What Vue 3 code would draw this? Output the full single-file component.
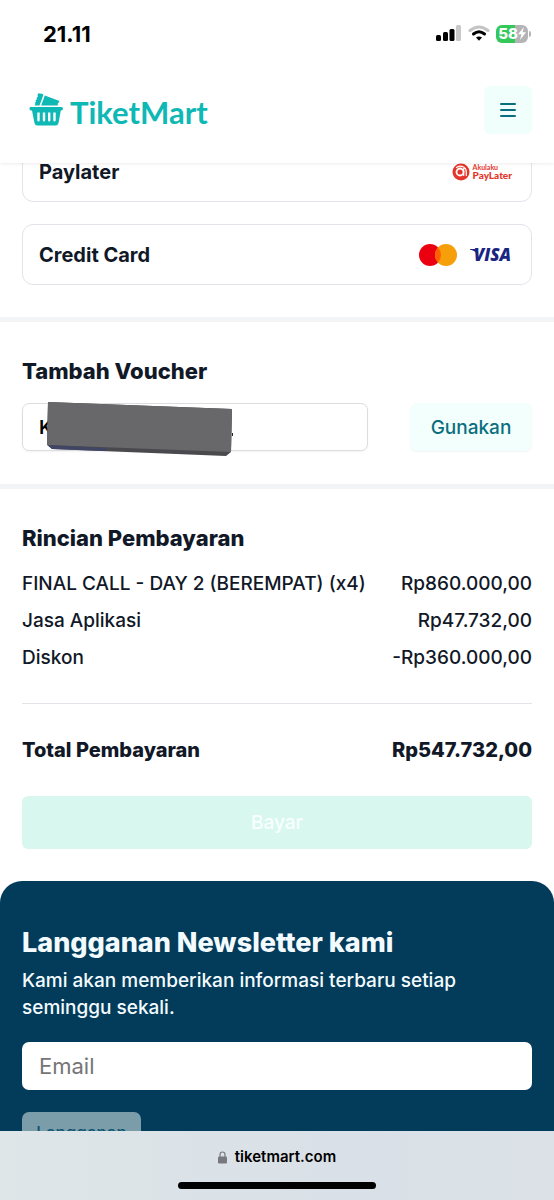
<script setup>
import { ref } from 'vue'

const voucher = ref('K')
const email = ref('')
const rows = [
  { label: 'FINAL CALL - DAY 2 (BEREMPAT) (x4)', value: 'Rp860.000,00' },
  { label: 'Jasa Aplikasi', value: 'Rp47.732,00' },
  { label: 'Diskon', value: '-Rp360.000,00' },
]
</script>

<template>
  <div class="screen">
    <header class="top">
      <div class="status">
        <span class="clock">21.11</span>
        <div class="indicators">
          <svg width="26" height="17" viewBox="0 0 26 17" aria-hidden="true">
            <rect x="0" y="10" width="5" height="6" rx="1.5" />
            <rect x="7" y="7" width="5" height="9" rx="1.5" />
            <rect x="13.500" y="4" width="5" height="12" rx="1.500" />
            <rect x="20" y="0" width="5" height="16" rx="1.500" fill="#c8c8c8" />
          </svg>
          <svg width="22" height="17" viewBox="0 0 22 17" fill="none" aria-hidden="true">
            <path d="M2 5.500Q11-1.500 20 5.500" stroke="#c4c4c4" stroke-width="3" stroke-linecap="round" />
            <path d="M5.500 9Q11 4.500 16.500 9" stroke="#000" stroke-width="3" stroke-linecap="round" />
            <path d="M8 12.500Q11 10.300 14 12.500L11 15.800Z" fill="#000" />
          </svg>
          <div class="battery">
            <span class="cell">58<svg width="8" height="13" viewBox="0 0 8 13" aria-hidden="true"><path d="M6 0L0 7.300H3.500L2 13L8 5.300H4.500Z" fill="#fff" /></svg></span>
            <span class="tip"></span>
          </div>
        </div>
      </div>
      <nav class="nav">
        <a class="brand" href="#">
          <svg width="35" height="34" viewBox="0 0 35 34" fill="#0db8b5" aria-hidden="true">
            <path d="M9.500 0L11 .8 12 .4 14.500 1.500 10.500 12.500H5.500L6.500 11 5.800 9.800 7 8.700 6.600 7.300 8 6.200 7.600 4.800 8.800 3.700 8.600 2Z" />
            <path d="M15.800 2.500L30.500 8 29.800 9.500 28.700 10.500 28.800 12.500H12.200Z" />
            <path fill-rule="evenodd" d="M1.800 14H32.500Q34 14 34 15.500T32.500 17.500H31.800L29.500 30Q29 32.500 26.500 32.500H8.500Q6 32.500 5.500 30L3 17.500H1.800Q.5 17.500 .5 15.500T1.800 14ZM8.300 19.500V27Q8.300 28.500 9.500 28.500T10.700 27V19.500ZM13.800 19.500V27Q13.800 28.500 15 28.500T16.200 27V19.500ZM19 19.500V27Q19 28.500 20.200 28.500T21.400 27V19.500ZM24.300 19.500V27Q24.300 28.500 25.500 28.500T26.700 27V19.500Z" />
          </svg>
          <span class="wordmark">TiketMart</span>
        </a>
        <button class="menu" type="button" aria-label="Menu">
          <svg width="18" height="16" viewBox="0 0 18 16" stroke="#0b6e80" stroke-width="2" stroke-linecap="round" aria-hidden="true">
            <path d="M2 2H16M2 8H16M2 14H16" />
          </svg>
        </button>
      </nav>
    </header>

    <main class="content">
      <section class="methods">
        <button class="card" type="button">
          <span>Paylater</span>
          <span class="akulaku">
            <svg width="18" height="18" viewBox="0 0 18 18" fill="none" aria-hidden="true">
              <circle cx="9" cy="9" r="8.500" fill="#e4352b" />
              <circle cx="8" cy="9" r="3.500" stroke="#fff" stroke-width="1.800" />
              <path d="M11.700 5.500V12.500M4.500 4.500Q8 2.200 11.500 4Q14.300 5.600 14.300 9V12.500" stroke="#fff" stroke-width="1.200" stroke-linecap="round" />
            </svg>
            <span class="akulaku-text"><small>Akulaku</small><b>PayLater</b></span>
          </span>
        </button>
        <button class="card" type="button">
          <span>Credit Card</span>
          <span class="networks">
            <svg width="38" height="22" viewBox="0 0 38 22" aria-hidden="true">
              <circle cx="11" cy="11" r="11" fill="#eb0010" />
              <circle cx="27" cy="11" r="11" fill="#f79e0b" />
              <path d="M19 3.500A11 11 0 0 1 19 18.500A11 11 0 0 1 19 3.500Z" fill="#ff5f00" />
            </svg>
            <span class="visa">
              <svg width="8" height="6" viewBox="0 0 8 6" aria-hidden="true">
                <path d="M0 0H5Q6.500 0 7 1.500L7.500 5.500Q5 1.500 0 .7Z" fill="#1a2582" />
              </svg>
              <span>VISA</span>
            </span>
          </span>
        </button>
      </section>

      <section class="block">
        <h2><label for="voucher">Tambah Voucher</label></h2>
        <form class="voucher" @submit.prevent>
          <div class="field">
            <input id="voucher" v-model="voucher" type="text" />
            <svg class="cover" width="190" height="56" viewBox="0 0 190 56" aria-hidden="true">
              <path d="M2 0L186 7L185 50L180 54L6 47L1 42Z" fill="#4a494d" />
              <path d="M2 0L186 7L185 50L1 43Z" fill="#68686a" />
              <path d="M6 47L1 43L60 46V49Z" fill="#414565" />
              <rect x="186" y="31" width="1" height="3" fill="#222" />
            </svg>
          </div>
          <button class="apply" type="submit">Gunakan</button>
        </form>
      </section>

      <section class="block details">
        <h2>Rincian Pembayaran</h2>
        <dl>
          <div v-for="row in rows" :key="row.label" class="row">
            <dt>{{ row.label }}</dt>
            <dd>{{ row.value }}</dd>
          </div>
          <div class="row total">
            <dt>Total Pembayaran</dt>
            <dd>Rp547.732,00</dd>
          </div>
        </dl>
        <button class="pay" type="button">Bayar</button>
      </section>

      <footer class="newsletter">
        <h3>Langganan Newsletter kami</h3>
        <p>Kami akan memberikan informasi terbaru setiap seminggu sekali.</p>
        <form @submit.prevent>
          <input v-model="email" type="email" placeholder="Email" aria-label="Email" />
          <button class="subscribe" type="submit">Langganan</button>
        </form>
      </footer>
    </main>

    <div class="browser">
      <div class="address">
        <svg width="9" height="13" viewBox="0 0 9 13" aria-hidden="true">
          <rect x="0" y="5.500" width="9" height="7" rx="1.300" fill="#77797e" />
          <path d="M2 6V3.500Q2 1 4.500 1T7 3.500V6" fill="none" stroke="#77797e" stroke-width="1.200" />
        </svg>
        <span>tiketmart.com</span>
      </div>
      <div class="home"></div>
    </div>
  </div>
</template>

<style>
body {
  margin: 0;
}
</style>

<style scoped>
.screen {
  display: flex;
  flex-direction: column;
  height: 100vh;
  overflow: hidden;
  background: #fff;
  color: #111827;
  font-family: Inter, "Liberation Sans", sans-serif;
  font-size: 19px;
}
.screen * {
  box-sizing: border-box;
}
button,
input {
  font: inherit;
  color: inherit;
}
button {
  border: 0;
  padding: 0;
}
.top {
  position: relative;
  z-index: 1;
  flex: none;
  background: #fff;
  box-shadow: 0 1px 3px rgba(0, 0, 0, 0.08);
}
.status {
  display: flex;
  align-items: center;
  justify-content: space-between;
  height: 67px;
  padding: 0 23px 0 43px;
  color: #000;
}
.clock {
  font-size: 22px;
  font-weight: 700;
}
.indicators {
  display: flex;
  align-items: center;
  gap: 6px;
}
.battery {
  display: flex;
  align-items: center;
  gap: 1px;
}
.cell {
  display: flex;
  align-items: center;
  justify-content: center;
  width: 32px;
  height: 18px;
  border-radius: 6px;
  background: linear-gradient(90deg, #34c759 58%, #b4b4b6 58%);
  color: #fff;
  font-size: 15px;
  font-weight: 800;
}
.tip {
  width: 2px;
  height: 6px;
  border-radius: 0 2px 2px 0;
  background: #b4b4b6;
}
.nav {
  display: flex;
  align-items: center;
  justify-content: space-between;
  height: 96px;
  padding: 0 22px 10px 29px;
}
.brand {
  display: flex;
  align-items: center;
  gap: 6px;
  color: #0db8b5;
  text-decoration: none;
}
.wordmark {
  padding-top: 4px;
  font-family: Lato, sans-serif;
  font-size: 31px;
  font-weight: 700;
  line-height: 32px;
}
.menu {
  display: grid;
  place-items: center;
  width: 48px;
  height: 48px;
  border-radius: 6px;
  background: #f0fffc;
}
.content {
  flex: 1;
  min-height: 0;
  margin-top: -22px;
  overflow: hidden;
}
.methods {
  display: grid;
  gap: 22px;
  padding: 0 22px 32px;
}
.card {
  display: flex;
  align-items: center;
  justify-content: space-between;
  height: 61px;
  padding: 0 19px 0 16px;
  border: 1px solid #e2e4e9;
  border-radius: 11px;
  background: #fff;
  font-size: 20px;
  font-weight: 700;
}
.akulaku {
  display: flex;
  align-items: center;
  gap: 3px;
  color: #e4352b;
  font-family: Lato, sans-serif;
}
.akulaku-text {
  display: grid;
  text-align: left;
}
.akulaku-text small {
  font-size: 7px;
  line-height: 7px;
}
.akulaku-text b {
  font-size: 10px;
  line-height: 9px;
}
.networks {
  display: flex;
  align-items: center;
  gap: 13px;
}
.visa {
  position: relative;
  padding: 0 1px 0 4px;
  color: #1a2582;
  font-family: "Open Sans", sans-serif;
  font-size: 17px;
  font-style: italic;
  font-weight: 800;
  line-height: 24px;
}
.visa svg {
  position: absolute;
  top: 6px;
  left: 0;
}
.block {
  padding: 34px 22px 33px;
  border-top: 5px solid #f2f4f6;
}
h2 {
  margin: 0;
  font-size: 22px;
  font-weight: 800;
  line-height: 30px;
}
.voucher {
  display: flex;
  gap: 42px;
  margin-top: 17px;
}
.field {
  position: relative;
  flex: 1;
}
.field input {
  width: 100%;
  height: 48px;
  padding: 0 16px;
  border: 1px solid #dcdde0;
  border-radius: 7px;
  background: #fff;
  box-shadow: 0 1px 2px rgba(0, 0, 0, 0.05);
  color: #000;
  font-weight: 600;
}
.cover {
  position: absolute;
  top: -1px;
  left: 24px;
}
.apply {
  width: 122px;
  height: 48px;
  border-radius: 7px;
  background: #f3fffc;
  box-shadow: 0 1px 2px rgba(0, 0, 0, 0.05);
  color: #0b6e80;
  font-weight: 500;
}
.details {
  padding-bottom: 32px;
}
dl {
  margin: 12px 0 0;
}
.row {
  display: flex;
  align-items: center;
  justify-content: space-between;
  height: 37px;
  font-weight: 500;
}
dd {
  margin: 0;
}
.total {
  height: 93px;
  margin-top: 27px;
  border-top: 1px solid #e2e4e9;
  font-size: 20px;
  font-weight: 800;
}
.pay {
  display: block;
  width: 100%;
  height: 53px;
  border-radius: 6px;
  background: #d8f7ef;
  color: #f8fffd;
  font-weight: 500;
}
.newsletter {
  padding: 44px 22px;
  border-radius: 22px 22px 0 0;
  background: #033b5a;
  color: #f3fbff;
}
h3 {
  margin: 0;
  font-size: 27px;
  font-weight: 800;
  line-height: 36px;
}
.newsletter p {
  margin: 6px 0 21px;
  font-weight: 500;
  line-height: 27px;
}
.newsletter input {
  display: block;
  width: 100%;
  height: 48px;
  padding: 0 17px;
  border: 0;
  border-radius: 7px;
  background: #fff;
  color: #111827;
  font-size: 22px;
}
.newsletter input::placeholder {
  color: #757575;
  opacity: 1;
}
.subscribe {
  width: 119px;
  height: 42px;
  margin-top: 22px;
  border-radius: 7px;
  background: #7b9da9;
  color: #0b5570;
  font-size: 17px;
  font-weight: 500;
}
.browser {
  flex: none;
  display: flex;
  flex-direction: column;
  align-items: center;
  justify-content: space-between;
  height: 69px;
  padding: 16px 0 11px;
  background: linear-gradient(90deg, #dfe6e8, #d9e0e7 60%, #dbe1e7);
  color: #000;
}
.address {
  display: flex;
  align-items: center;
  gap: 8px;
  font-size: 15px;
  font-weight: 600;
  line-height: 20px;
}
.home {
  width: 198px;
  height: 7px;
  border-radius: 4px;
  background: #000;
}
</style>
